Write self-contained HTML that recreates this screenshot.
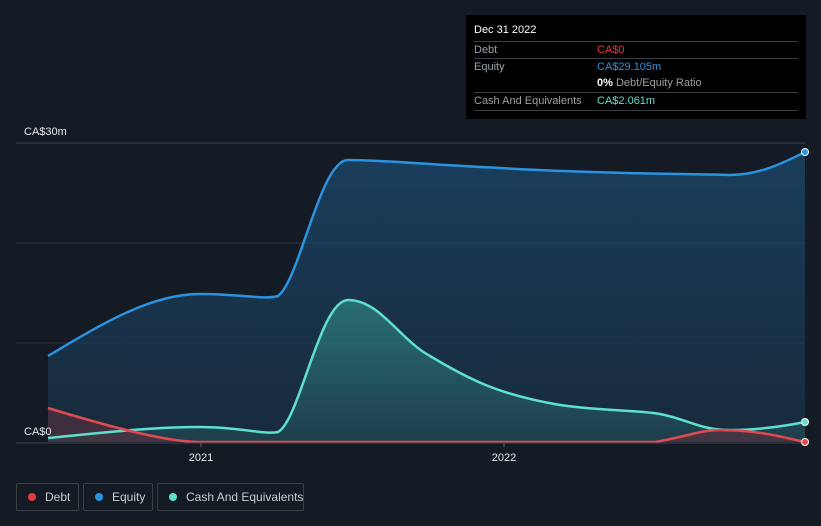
<!DOCTYPE html>
<html><head><style>
body{margin:0;width:821px;height:526px;background:#151b24;font-family:"Liberation Sans",sans-serif;overflow:hidden;position:relative}
.tip{position:absolute;left:466px;top:15px;width:340px;height:104px;background:#000;color:#fff;font-size:11px}
.row{position:absolute;left:8px;width:324px;border-top:1px solid #3a3f46;height:17px;line-height:17px}
.l{color:#9aa0a6;position:absolute;left:0}
.v{position:absolute;left:123px}
.leg{position:absolute;top:483px;height:28px;border:1px solid #3a3f46;border-radius:2px;color:#c8ccd2;font-size:12px;line-height:26px;box-sizing:border-box;white-space:nowrap}
.dot{display:inline-block;width:8px;height:8px;border-radius:50%;margin:0 9px 0 11px;vertical-align:0px}
</style></head><body>
<svg width="821" height="526" style="position:absolute;left:0;top:0">
<defs>
<linearGradient id="ge" x1="0" y1="0" x2="0" y2="1"><stop offset="0" stop-color="#1b4a70" stop-opacity=".75"/><stop offset="1" stop-color="#1b3a55" stop-opacity=".5"/></linearGradient>
<linearGradient id="gc" x1="0" y1="0" x2="0" y2="1"><stop offset="0" stop-color="#3aa89a" stop-opacity=".5"/><stop offset="1" stop-color="#3aa89a" stop-opacity=".15"/></linearGradient>
</defs>
<line x1="16" y1="143" x2="805" y2="143" stroke="#3a4250"/>
<line x1="16" y1="243" x2="805" y2="243" stroke="#2a3240"/>
<line x1="16" y1="343" x2="805" y2="343" stroke="#2a3240"/>
<path d="M48,356 C100,325 150,294 200,294 C240,294 265,300 278,296 C300,280 320,160 348,160 C380,160 420,164 500,168 C600,174 700,174 730,175 C760,175 785,162 805,152 L805,442 L48,442Z" fill="url(#ge)"/>
<path d="M48,438 C100,433 150,427 200,427 C240,427 265,435 278,432 C300,420 320,300 348,300 C380,300 400,340 430,356 C470,380 500,395 560,405 C600,411 640,410 660,414 C690,420 700,430 730,430 C760,430 785,426 805,422 L805,442 L48,442Z" fill="url(#gc)"/>
<path d="M48,408 C120,430 170,442 200,442 L655,442 C690,436 700,430 720,430 C760,430 785,438 805,442 L805,442 L48,442Z" fill="#5a3040" opacity=".6"/>
<path d="M48,356 C100,325 150,294 200,294 C240,294 265,300 278,296 C300,280 320,160 348,160 C380,160 420,164 500,168 C600,174 700,174 730,175 C760,175 785,162 805,152" fill="none" stroke="#2a93e0" stroke-width="2.5"/>
<path d="M48,438 C100,433 150,427 200,427 C240,427 265,435 278,432 C300,420 320,300 348,300 C380,300 400,340 430,356 C470,380 500,395 560,405 C600,411 640,410 660,414 C690,420 700,430 730,430 C760,430 785,426 805,422" fill="none" stroke="#5de0cc" stroke-width="2.5"/>
<path d="M48,408 C120,430 170,442 200,442 L655,442 C690,436 700,430 720,430 C760,430 785,438 805,442" fill="none" stroke="#e04a50" stroke-width="2.5"/>
<line x1="16" y1="443" x2="805" y2="443" stroke="#3a4250"/>
<line x1="201" y1="443" x2="201" y2="447" stroke="#5a6270"/>
<line x1="504" y1="443" x2="504" y2="447" stroke="#5a6270"/>
<circle cx="805" cy="152" r="3.5" fill="#2a93e0" stroke="#fff" stroke-width="1"/>
<circle cx="805" cy="422" r="3.5" fill="#5de0cc" stroke="#fff" stroke-width="1"/>
<circle cx="805" cy="442" r="3.5" fill="#e04a50" stroke="#fff" stroke-width="1"/>
<text x="24" y="135" fill="#e6e8ea" font-size="11" font-family="Liberation Sans">CA$30m</text>
<text x="24" y="435" fill="#e6e8ea" font-size="11" font-family="Liberation Sans">CA$0</text>
<text x="201" y="461" fill="#e6e8ea" font-size="11" text-anchor="middle" font-family="Liberation Sans">2021</text>
<text x="504" y="461" fill="#e6e8ea" font-size="11" text-anchor="middle" font-family="Liberation Sans">2022</text>
</svg>
<div class="tip">
<div style="position:absolute;left:8px;top:9px;font-size:11px">Dec 31 2022</div>
<div class="row" style="top:26px"><span class="l">Debt</span><span class="v" style="color:#e5383f">CA$0</span></div>
<div class="row" style="top:43px"><span class="l">Equity</span><span class="v" style="color:#2a93e0">CA$29.105m</span></div>
<div class="row" style="top:60px;border-top:none"><span class="v"><b>0%</b> <span style="color:#9aa0a6">Debt/Equity Ratio</span></span></div>
<div class="row" style="top:77px"><span class="l">Cash And Equivalents</span><span class="v" style="color:#5de0cc">CA$2.061m</span></div>
<div class="row" style="top:95px;height:0"></div>
</div>
<div class="leg" style="left:16px;width:63px"><span class="dot" style="background:#e5383f"></span>Debt</div>
<div class="leg" style="left:83px;width:70px"><span class="dot" style="background:#2a93e0"></span>Equity</div>
<div class="leg" style="left:157px;width:147px"><span class="dot" style="background:#5de0cc"></span>Cash And Equivalents</div>
</body></html>
